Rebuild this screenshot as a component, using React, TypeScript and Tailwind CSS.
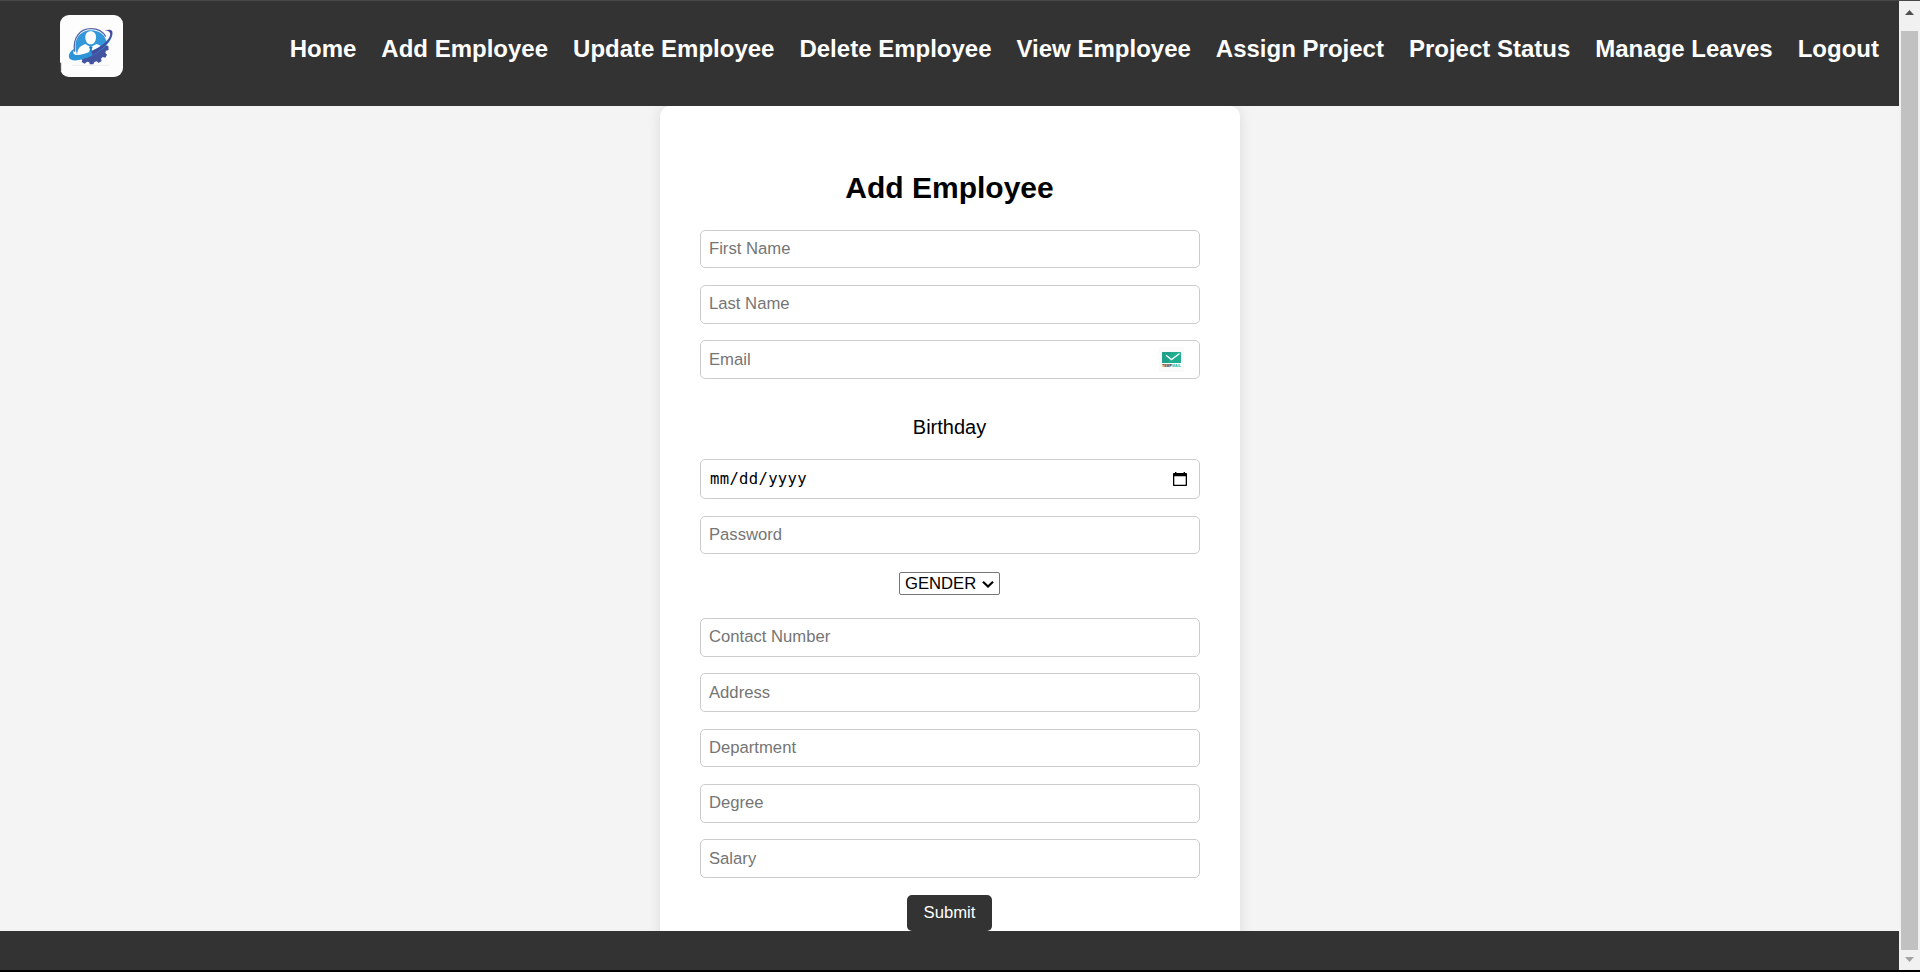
import React from "react";

const NAV_ITEMS = [
  "Home",
  "Add Employee",
  "Update Employee",
  "Delete Employee",
  "View Employee",
  "Assign Project",
  "Project Status",
  "Manage Leaves",
  "Logout",
];

function Logo() {
  return (
    <svg className="h-[62px] w-[63px] shrink-0" viewBox="15 9 189 186" aria-label="Employee management logo">
      <rect x="15" y="9" width="189" height="186" rx="27" fill="#fdfdfd" />
      <path d="M17 152v26" stroke="#333" strokeWidth="3" />
      <path d="M52 160h112" stroke="#ececec" strokeWidth="3" />
      {/* gear */}
      <path
        d="M70 134l12 10-2 6 9 5 7-6 7 2 1 6h11l3-7 7-2 6 5 9-6-2-7 5-5 8 2 5-9-5-6 2-6 8-2-1-12-10-3-20 8-30 20z"
        fill="#43539f"
      />
      {/* disc behind the person */}
      <path d="M58 120C52 74 76 50 108 50c26 0 44 14 50 36l-20 24-40 20-32 6z" fill="#fdfdfd" />
      <path d="M59 119C52 76 76 50 108 50c21 0 36 9 44 24" fill="none" stroke="#5566aa" strokeWidth="4" />
      <path d="M63 117C55 79 78 55 108 55c26 0 44 16 47 37l-19 16-40 20-28 6z" fill="#3298d9" />
      {/* person */}
      <path d="M107 58c-10 0-16 7-16 17 0 13 6 22 16 22s16-9 16-22c0-10-6-17-16-17z" fill="#fff" />
      <path d="M66 134c1-21 5-31 25-38l16 10 17-10c11 4 14 5 17 10l-33 24z" fill="#fff" />
      <path d="M102 105h11l-3 7 3 13-8 8-4-7 4-14z" fill="#1d78c2" />
      {/* orbit */}
      <path d="M60 109c-13 7-20 17-18 27 3 15 38 11 72-6 31-16 56-43 59-65-16 24-37 40-63 51-27 13-49 17-54 9-2-4 0-10 4-16z" fill="#2c93d7" />
      <path d="M149 55c16-5 26-1 23 11-5 22-27 45-60 64l-2-12c29-14 50-32 55-47 3-9-3-15-16-16z" fill="#454b9e" />
    </svg>
  );
}

function TempMailIcon() {
  return (
    <svg className="h-[25px] w-[25px]" viewBox="0 0 25 25" aria-label="TempMail">
      <rect width="25" height="25" rx="2" fill="#fafafa" />
      <rect x="3" y="5" width="19" height="11" rx=".5" fill="#1fae90" />
      <path d="M3 5h9l-3 11H3z" fill="#209683" opacity=".6" />
      <path d="M7 8.3l5.5 4.2L20.5 6.5" fill="none" stroke="#f5fffc" strokeWidth="1.4" />
      <text x="3" y="20" fontSize="3.8" fontWeight="bold" fontFamily="Liberation Sans, sans-serif" textLength="10" lengthAdjust="spacingAndGlyphs" fill="#17273b">TEMP</text>
      <text x="13" y="20" fontSize="3.8" fontWeight="bold" fontFamily="Liberation Sans, sans-serif" textLength="9" lengthAdjust="spacingAndGlyphs" fill="#25b89a">MAIL</text>
    </svg>
  );
}

function Field({ label, type = "text", className }: { label: string; type?: string; className: string }) {
  return (
    <input
      type={type}
      placeholder={label}
      className={`block w-full shrink-0 rounded-[5px] border border-[#ccc] bg-white px-2 text-[16.67px] leading-[19px] outline-none placeholder:text-[#757575] placeholder:opacity-100 ${className}`}
    />
  );
}

function Header() {
  return (
    <header className="flex h-[106px] shrink-0 items-start justify-between border-t border-[#484848] bg-[#333] pl-[60px] pr-5 pt-3.5">
      <Logo />
      <nav className="mt-5 flex gap-[25px] whitespace-nowrap text-2xl leading-7 font-bold text-white">
        {NAV_ITEMS.map((item) => (
          <a key={item} href="#">{item}</a>
        ))}
      </nav>
    </header>
  );
}

function EmployeeForm() {
  return (
    <form className="flex h-[900px] w-[580px] flex-col items-center rounded-[10px] bg-white px-10 pt-16 shadow-[0_0_12.5px_rgba(0,0,0,0.1)]">
      <h2 className="mr-px h-[60px] shrink-0 text-[30px] leading-[35px] font-bold text-black">Add Employee</h2>
      <Field label="First Name" className="h-[38px] pb-px" />
      <Field label="Last Name" className="mt-[17px] h-[39px] pb-0.5" />
      <div className="relative mt-4 w-full shrink-0">
        <Field label="Email" type="email" className="h-[39px]" />
        <span className="absolute top-[7px] right-4"><TempMailIcon /></span>
      </div>
      <label className="mt-9 mr-px h-11 shrink-0 text-xl leading-6 text-black">Birthday</label>
      <div className="flex h-10 w-full shrink-0 items-center justify-between rounded-[5px] border border-[#ccc] bg-white pr-[11px] pl-[9px]">
        <span className="pt-px font-['DejaVu_Sans_Mono',monospace] text-[15.6px] tracking-[0.3px] text-black">mm/dd/yyyy</span>
        <svg className="h-4 w-4" viewBox="0 0 16 16" aria-label="Open calendar">
          <path d="M2 2h1V1h1.4v1h7.2V1H13v1h1c.6 0 1 .4 1 1v11c0 .6-.4 1-1 1H2c-.6 0-1-.4-1-1V3c0-.6.4-1 1-1zm.3 3.2v8.5h11.4V5.2z" fill="#000" fillRule="evenodd" />
        </svg>
      </div>
      <Field label="Password" type="password" className="mt-[17px] h-[38px] pb-px" />
      <button type="button" className="mt-[18px] mr-px flex h-[23px] w-[101px] shrink-0 items-center justify-between rounded-xs border border-[#767676] bg-white pr-[5px] pl-[5px] text-[16.67px] leading-5 text-black">
        GENDER
        <svg className="h-3 w-3" viewBox="0 0 12 12" fill="none" stroke="#000" strokeWidth="2.2" aria-hidden="true">
          <path d="M1 3.8l5 4.7 5-4.7" />
        </svg>
      </button>
      <Field label="Contact Number" className="mt-[23px] h-[39px] pb-0.5" />
      <Field label="Address" className="mt-4 h-[39px]" />
      <Field label="Department" className="mt-[17px] h-[38px] pb-px" />
      <Field label="Degree" className="mt-[17px] h-[39px] pb-0.5" />
      <Field label="Salary" className="mt-4 h-[39px]" />
      <button type="button" className="mt-[17px] mr-px h-9 w-[85px] shrink-0 rounded-[5px] bg-[#333] text-[16.67px] leading-5 text-white">Submit</button>
    </form>
  );
}

function Scrollbar() {
  return (
    <div className="flex w-[21px] flex-col items-center border-t border-[#484848] bg-[#f1f1f1]">
      <div className="flex h-[30px] shrink-0 items-start justify-center pt-[9px]">
        <svg className="h-[5px] w-[9px]" viewBox="0 0 9 5"><path d="M0 5L4.5 0 9 5z" fill="#505050" /></svg>
      </div>
      <div className="w-[17px] flex-1 bg-[#c1c1c1]" />
      <div className="flex h-5 shrink-0 items-start justify-center pt-[7px]">
        <svg className="h-[5px] w-[9px]" viewBox="0 0 9 5"><path d="M0 0L4.5 5 9 0z" fill="#a3a3a3" /></svg>
      </div>
    </div>
  );
}

export default function App() {
  return (
    <div className="h-[972px] w-[1920px] overflow-hidden border-b-2 border-black font-['Liberation_Sans',Arial,sans-serif]">
      <div className="flex h-[970px]">
        <div className="flex w-[1899px] flex-col">
          <Header />
          <main className="flex h-[825px] shrink-0 items-start justify-center overflow-hidden bg-[#f4f4f4] pl-px">
            <EmployeeForm />
          </main>
          <footer className="h-[39px] shrink-0 bg-[#333]" />
        </div>
        <Scrollbar />
      </div>
    </div>
  );
}
